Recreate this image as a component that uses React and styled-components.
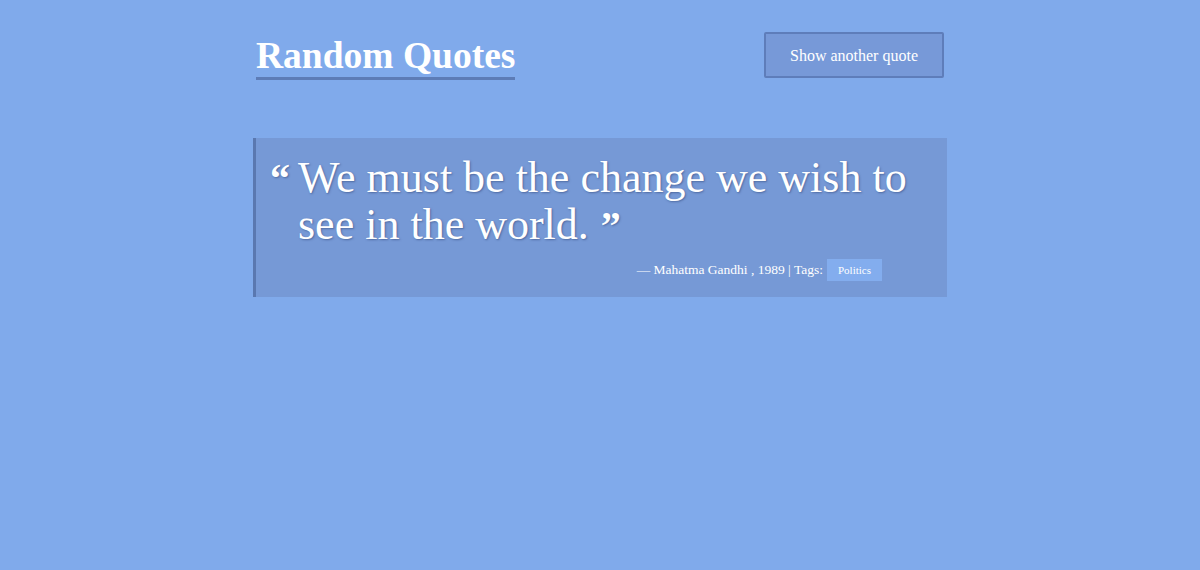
import React from "react";
import styled, { createGlobalStyle } from "styled-components";

const GlobalStyle = createGlobalStyle`
  html, body {
    margin: 0;
    padding: 0;
    background-color: #80aaeb;
    font-family: "Liberation Serif", "Times New Roman", serif;
    color: #fff;
  }
`;

const Page = styled.div`
  width: 694px;
  margin: 0 auto;
  padding-top: 32px;
`;

const Header = styled.header`
  display: flex;
  justify-content: space-between;
  align-items: flex-start;
  padding-left: 3px;
  padding-right: 3px;
`;

const Title = styled.h1`
  margin: 0;
  font-size: 37.5px;
  font-weight: bold;
  line-height: 44px;
  padding-top: 2px;
`;

const TitleText = styled.span`
  display: inline-block;
  border-bottom: 3px solid #5d7cb6;
  line-height: 42px;
`;

const Button = styled.button`
  width: 180px;
  height: 46px;
  padding-top: 3px;
  background-color: #7799d8;
  border: 2px solid #5e7dba;
  border-radius: 2px;
  color: #fff;
  font-family: inherit;
  font-size: 16px;
  cursor: pointer;
`;

const QuoteBox = styled.blockquote`
  margin: 58px 0 0;
  background-color: #7699d6;
  border-left: 3px solid #5a78b0;
  padding: 16px 30px 16px 14px;
`;

const QuoteBody = styled.div`
  display: flex;
  align-items: flex-start;
`;

const Mark = styled.span`
  font-size: 40px;
  font-weight: bold;
  line-height: 50px;
  margin-right: 8px;
  text-shadow: 1px 1px 2px rgba(40, 60, 110, 0.5);
`;

const QuoteText = styled.p`
  margin: 0;
  font-size: 44px;
  line-height: 47px;
  text-shadow: 1px 1px 2px rgba(40, 60, 110, 0.5);
`;

const CloseMark = styled.span`
  display: inline-block;
  font-size: 40px;
  line-height: 40px;
  font-weight: bold;
  margin-left: 12px;
`;

const Footer = styled.div`
  display: flex;
  justify-content: flex-end;
  align-items: center;
  gap: 4px;
  margin-top: 11px;
  padding-right: 35px;
  font-size: 13.5px;
`;

const Tag = styled.span`
  background-color: #83adee;
  font-size: 11px;
  line-height: 12px;
  padding: 5px 11px;
`;

const App = () => {
  return (
    <>
      <GlobalStyle />
      <Page>
        <Header>
          <Title>
            <TitleText>Random Quotes</TitleText>
          </Title>
          <Button>Show another quote</Button>
        </Header>
        <QuoteBox>
          <QuoteBody>
            <Mark>“</Mark>
            <QuoteText>
              We must be the change we wish to see in the world.
              <CloseMark>”</CloseMark>
            </QuoteText>
          </QuoteBody>
          <Footer>
            <span>— Mahatma Gandhi , 1989 | Tags:</span>
            <Tag>Politics</Tag>
          </Footer>
        </QuoteBox>
      </Page>
    </>
  );
};

export default App;
